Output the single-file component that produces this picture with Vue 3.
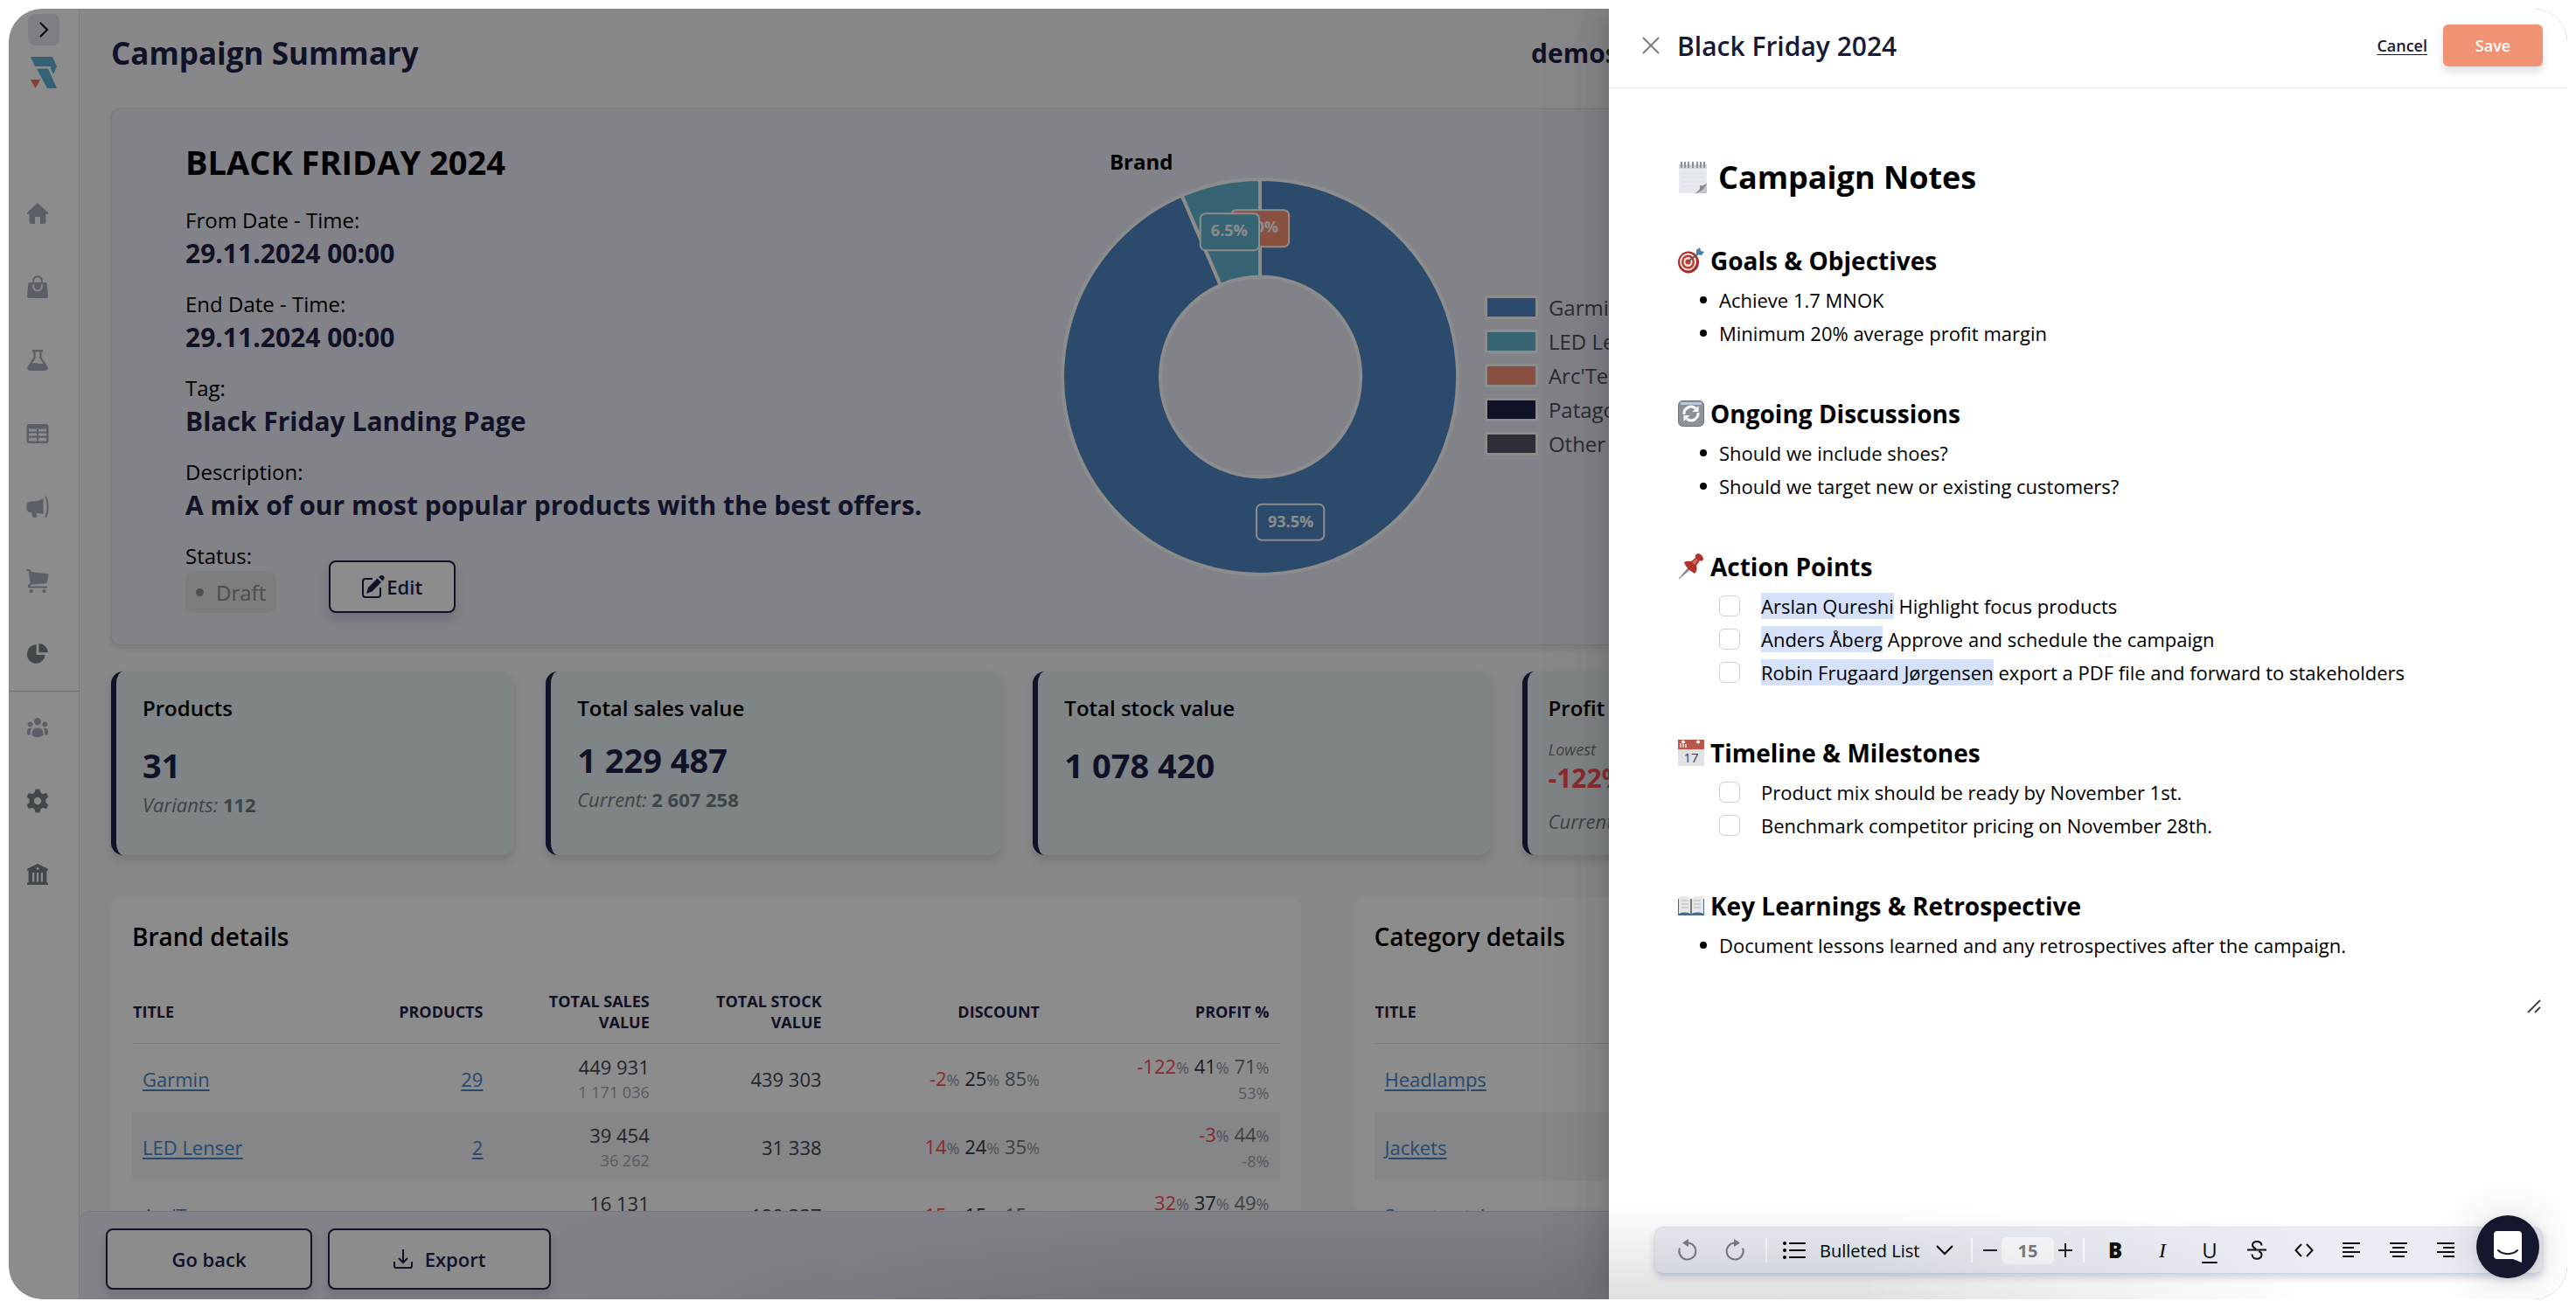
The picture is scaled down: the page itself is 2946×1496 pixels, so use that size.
<script setup>
import { ref } from 'vue';

const navItems = [
  { name: 'Home', path: 'M12 0 L24 11.4 A1 1 0 0 1 23.2 13 H21.4 V22 A2 2 0 0 1 19.4 24 H15 V17 A1 1 0 0 0 14 16 H10 A1 1 0 0 0 9 17 V24 H4.6 A2 2 0 0 1 2.6 22 V13 H.8 A1 1 0 0 1 0 11.4 Z' },
  { name: 'Products', path: 'M6 7 V5.6 A6 6.4 0 0 1 18 5.6 V7 H21.4 A1.2 1.2 0 0 1 22.6 8 L24 22.8 A2 2 0 0 1 22 25 H2 A2 2 0 0 1 0 22.8 L1.4 8 A1.2 1.2 0 0 1 2.6 7 Z M8 7 H16 V5.6 A4 4.4 0 0 0 8 5.6 Z M6.2 9.4 V11.6 A5.8 6 0 0 0 17.8 11.6 V9.4 H15.8 V11.6 A3.8 4 0 0 1 8.2 11.6 V9.4 Z' },
  { name: 'Experiments', path: 'M6 0 H18 V2.4 H16.6 V9 L23.4 19 A3.4 3.4 0 0 1 20.6 24 H3.4 A3.4 3.4 0 0 1 .6 19 L7.4 9 V2.4 H6 Z M9.6 2.4 V9.8 L5.6 15.6 C9 13.4 12 17.2 18.6 15.8 L14.4 9.8 V2.4 Z' },
  { name: 'Tables', path: 'M2.5 1 H21.5 A3 3 0 0 1 24.5 4 V20 A3 3 0 0 1 21.5 23 H2.5 A3 3 0 0 1 -.5 20 V4 A3 3 0 0 1 2.5 1 Z M2 6.4 V9.4 H11 V6.4 Z M13 6.4 V9.4 H22 V6.4 Z M2 11.6 V14.6 H11 V11.6 Z M13 11.6 V14.6 H22 V11.6 Z M2 16.8 V20.4 H11 V16.8 Z M13 16.8 V20.4 H22 V16.8 Z' },
  { name: 'Campaigns', path: 'M18.6 2 V20 L10.6 18.4 L11.4 22 A1.4 1.4 0 0 1 10 23.8 H7.6 A1.4 1.4 0 0 1 6.2 22.8 L5 18 H4 A4.6 4.6 0 0 1 -.6 13.4 V10 A4.6 4.6 0 0 1 4 5.4 H8 C12 5.2 15.4 4 18.6 2 Z M20.2 0 C23.4 7 23.4 16 20.2 23.4 L22 24 C25.4 17 25.4 6.6 22 -.6 Z' },
  { name: 'Orders', path: 'M-.6 -1 H2.6 A1.6 1.6 0 0 1 4.2 .2 L4.6 2 L24.6 4.4 L22.8 13.8 A2 2 0 0 1 21 15.4 L5.6 16.6 C3.4 17 3.2 18.6 5 18.6 H23 V20.6 H3.4 C-.6 20.4 .2 16.4 3.6 15 L1.8 1 H-.6 Z M4.8 22 A2.1 2.1 0 1 1 4.7 22 Z M19.6 22 A2.1 2.1 0 1 1 19.5 22 Z' },
  { name: 'Reports', dark: true, path: 'M10.6 1.2 V13 H20.6 A10.4 10.8 0 1 1 10.6 1.2 Z M13.4 0 A10.6 10.6 0 0 1 24 10.2 H13.4 Z' },
  { name: 'Users', divided: true, path: 'M12 0 A4 4.2 0 1 1 11.9 0 Z M3.6 4.6 A3 3 0 1 1 3.5 4.6 Z M20.4 4.6 A3 3 0 1 1 20.3 4.6 Z M12 11.4 C17 11.4 18.6 15 18.6 19.4 C16 23 8 23 5.4 19.4 C5.4 15 7 11.4 12 11.4 Z M5.4 12 C3.8 14 3.4 16.4 3.6 19.4 H1 C-.6 18 -1 12.6 3 11.8 Z M18.6 12 C20.2 14 20.6 16.4 20.4 19.4 H23 C24.6 18 25 12.6 21 11.8 Z' },
  { name: 'Settings', dark: true, path: 'M9.6 -1.4 H14.4 L15.4 2.6 L18 4.2 L22 3 L24.4 7.2 L21.4 10.2 V13.8 L24.4 16.8 L22 21 L18 19.8 L15.4 21.4 L14.4 25.4 H9.6 L8.6 21.4 L6 19.8 L2 21 L-.4 16.8 L2.6 13.8 V10.2 L-.4 7.2 L2 3 L6 4.2 L8.6 2.6 Z M12 7.8 A4.2 4.2 0 1 0 12.1 7.8 Z' },
  { name: 'Organisation', dark: true, path: 'M12 0 L23.6 5.4 V8 H22.4 V21.6 H24 V24 H0 V21.6 H1.6 V8 H.4 V5.4 Z M12 4 A1.5 1.5 0 1 0 12.1 4 Z M6 10 V20.6 H8.2 V10 Z M10.9 10 V20.6 H13.1 V10 Z M15.8 10 V20.6 H18 V10 Z' },
];

const details = [
  { label: 'From Date - Time:', value: '29.11.2024 00:00' },
  { label: 'End Date - Time:', value: '29.11.2024 00:00' },
  { label: 'Tag:', value: 'Black Friday Landing Page' },
  { label: 'Description:', value: 'A mix of our most popular products with the best offers.' },
];

const brands = [
  { name: 'Garmin', color: '#5087c4' },
  { name: 'LED Lenser', color: '#64b6cf' },
  { name: "Arc'Teryx", color: '#f79275' },
  { name: 'Patagonia', color: '#1e2348' },
  { name: 'Other', color: '#525466' },
];

const columns = ['Title', 'Products', 'Total sales value', 'Total stock value', 'Discount', 'Profit %'];

const tables = [
  {
    title: 'Brand details',
    rows: [
      { name: 'Garmin', products: 29, sales: '449 931', prev: '1 171 036', stock: '439 303', discount: [-2, 25, 85], profit: [-122, 41, 71], total: '53%' },
      { name: 'LED Lenser', products: 2, sales: '39 454', prev: '36 262', stock: '31 338', discount: [14, 24, 35], profit: [-3, 44], total: '-8%' },
      { name: "Arc'Teryx", products: '', sales: '16 131', prev: '14 208', stock: '129 337', discount: [15, 15, 15], profit: [32, 37, 49], total: '41%' },
    ],
  },
  {
    title: 'Category details',
    rows: [
      { name: 'Headlamps', products: 2, sales: '39 454', prev: '36 262', stock: '31 338', discount: [14, 24, 35], profit: [-3, 44], total: '-8%' },
      { name: 'Jackets', products: 4, sales: '16 131', prev: '14 208', stock: '129 337', discount: [15, 15, 15], profit: [32, 37, 49], total: '41%' },
      { name: 'Smartwatch', products: 25, sales: '449 931', prev: '1 171 036', stock: '439 303', discount: [-2, 25, 85], profit: [-122, 41, 71], total: '53%' },
    ],
  },
];

const discussions = ['Should we include shoes?', 'Should we target new or existing customers?'];

const actions = ref([
  { id: 1, who: 'Arslan Qureshi', text: 'Highlight focus products', done: false },
  { id: 2, who: 'Anders Åberg', text: 'Approve and schedule the campaign', done: false },
  { id: 3, who: 'Robin Frugaard Jørgensen', text: 'export a PDF file and forward to stakeholders', done: false },
]);

const milestones = ref([
  { id: 4, text: 'Product mix should be ready by November 1st.', done: false },
  { id: 5, text: 'Benchmark competitor pricing on November 28th.', done: false },
]);

const blockType = ref('Bulleted List');
const fontSize = ref(15);

// low is red, mid is dark, high is grey
function tone(index) {
  return ['low', 'mid', 'high'][index];
}
</script>

<template>
  <main class="page">
    <div class="frame">
      <aside class="sidebar">
        <button class="sidebar-toggle" aria-label="Expand menu">
          <svg width="12" height="20" viewBox="0 0 12 20"><path d="M2 2 L10 10 L2 18" fill="none" stroke="#000" stroke-width="2" /></svg>
        </button>
        <svg class="logo" width="30" height="36" viewBox="0 0 30 36">
          <path d="M0 0 H25 L30 11 L26 20 L22.5 12.5 L24 11 H5 Z" fill="#5fb3d3" />
          <path d="M7 13.5 H20 L30 36 H19 Z" fill="#5fb3d3" />
          <path d="M0 26 H11 L5.500 36 Z" fill="#ff6a5a" />
        </svg>
        <nav class="nav">
          <a v-for="item in navItems" :key="item.name" href="#" class="nav-link" :class="{ dark: item.dark, divided: item.divided }" :aria-label="item.name">
            <svg width="28" height="28" viewBox="-2 -2 28 28"><path :d="item.path" fill="currentColor" fill-rule="evenodd" /></svg>
          </a>
        </nav>
      </aside>

      <div class="content">
        <div class="scroll">
          <header class="top">
            <h1>Campaign Summary</h1>
            <span class="store">demostore</span>
          </header>

          <section class="summary">
            <div class="info">
              <h2>BLACK FRIDAY 2024</h2>
              <dl>
                <div v-for="item in details" :key="item.label" class="detail">
                  <dt>{{ item.label }}</dt>
                  <dd>{{ item.value }}</dd>
                </div>
              </dl>
              <div class="status">
                <div>
                  <p class="status-label">Status:</p>
                  <span class="badge">Draft</span>
                </div>
                <button class="btn edit-btn">
                  <svg width="26" height="26" viewBox="0 0 26 26">
                    <path d="M12 4 H4 A3 3 0 0 0 1 7 V22 A3 3 0 0 0 4 25 H18 A3 3 0 0 0 21 22 V14" fill="none" stroke="currentColor" stroke-width="2" />
                    <path d="M5 21 L7 14 L17.500 3.500 L22 8 L11.500 18.500 Z M19 2 L21 .5 A3 3 0 0 1 25 4.800 L23.500 6.500 Z" fill="currentColor" />
                  </svg>
                  Edit
                </button>
              </div>
            </div>

            <div class="chart">
              <h3>Brand</h3>
              <div class="chart-row">
                <svg width="458" height="458" viewBox="-228 -228 456 456">
                  <g stroke="#fff" stroke-width="4">
                    <path d="M0 -225 A225 225 0 1 1 -89 -206.600 L-45 -104.500 A114 114 0 1 0 0 -114 Z" fill="#5087c4" />
                    <path d="M-89 -206.600 A225 225 0 0 1 0 -225 V-114 A114 114 0 0 0 -45 -104.500 Z" fill="#64b6cf" />
                  </g>
                  <g stroke="#fff" stroke-width="2">
                    <rect x="-33" y="-190" width="66" height="42" rx="6" fill="#f79275" />
                    <rect x="-4" y="145" width="77" height="41" rx="6" fill="#5087c4" />
                  </g>
                  <g class="chart-label">
                    <text x="0" y="-164">0.0%</text>
                    <text x="35" y="171">93.5%</text>
                  </g>
                  <rect x="-68" y="-186" width="67" height="42" rx="6" fill="#64b6cf" stroke="#fff" stroke-width="2" />
                  <text class="chart-label" x="-35" y="-160">6.5%</text>
                </svg>
                <ul class="legend">
                  <li v-for="brand in brands" :key="brand.name">
                    <span class="swatch" :style="{ backgroundColor: brand.color }"></span>{{ brand.name }}
                  </li>
                </ul>
              </div>
            </div>
          </section>

          <section class="stats">
            <article class="stat">
              <h3>Products</h3>
              <p class="stat-value">31</p>
              <p class="stat-note"><em>Variants:</em> <b>112</b></p>
            </article>
            <article class="stat raised">
              <h3>Total sales value</h3>
              <p class="stat-value">1 229 487</p>
              <p class="stat-note"><em>Current:</em> <b>2 607 258</b></p>
            </article>
            <article class="stat">
              <h3>Total stock value</h3>
              <p class="stat-value">1 078 420</p>
            </article>
            <article class="stat raised compact">
              <h3>Profit</h3>
              <p class="stat-caption">Lowest</p>
              <p class="stat-low">-122%</p>
              <p class="stat-note"><em>Current:</em></p>
            </article>
          </section>

          <section class="tables">
            <article v-for="table in tables" :key="table.title" class="table-card">
              <h3>{{ table.title }}</h3>
              <table>
                <thead>
                  <tr>
                    <th v-for="column in columns" :key="column">{{ column }}</th>
                  </tr>
                </thead>
                <tbody>
                  <tr v-for="row in table.rows" :key="row.name">
                    <td><a href="#">{{ row.name }}</a></td>
                    <td><a href="#">{{ row.products }}</a></td>
                    <td>{{ row.sales }}<small>{{ row.prev }}</small></td>
                    <td>{{ row.stock }}</td>
                    <td>
                      <template v-for="(value, i) in row.discount" :key="i"><span :class="tone(i)">{{ value }}</span><i>%</i>{{ ' ' }}</template>
                    </td>
                    <td>
                      <template v-for="(value, i) in row.profit" :key="i"><span :class="tone(row.profit.length === 2 && i ? 2 : i)">{{ value }}</span><i>%</i>{{ ' ' }}</template>
                      <small>{{ row.total }}</small>
                    </td>
                  </tr>
                </tbody>
              </table>
            </article>
          </section>
        </div>

        <footer class="footer">
          <button class="btn back-btn">Go back</button>
          <button class="btn export-btn">
            <svg width="22" height="22" viewBox="0 0 22 22"><path d="M11 0 V15 M6 10 L11 15 L16 10 M1 14 V19 A2 2 0 0 0 3 21 H19 A2 2 0 0 0 21 19 V14" fill="none" stroke="currentColor" stroke-width="2" /></svg>
            Export
          </button>
        </footer>
      </div>

      <div class="mask"></div>

      <aside class="drawer">
        <header class="drawer-header">
          <button class="close" aria-label="Close">
            <svg width="20" height="20" viewBox="0 0 20 20"><path d="M1 1 L19 19 M19 1 L1 19" stroke="#7c7c80" stroke-width="2" /></svg>
          </button>
          <h2>Black Friday 2024</h2>
          <button class="cancel">Cancel</button>
          <button class="save">Save</button>
        </header>

        <div class="notes">
          <h1>
            <svg width="34" height="38" viewBox="0 0 34 38">
              <path d="M1 4 H33 V26 L22 37 H1 Z" fill="#e6e9ee" />
              <path d="M1 4 H33 V9 H1 Z" fill="#d3d6dc" />
              <path d="M4 1 V8 M8 1 V8 M12 1 V8 M17 1 V8 M22 1 V8 M26 1 V8 M30 1 V8" stroke="#8c9098" stroke-width="2" />
              <path d="M3 14 H31 M3 19 H31 M3 24 H31 M3 29 H24" stroke="#d9dfe8" />
              <path d="M33 25 C30 29 27 28 25 28 C26 32 24 35 19 37 H33 Z" fill="#c3c6cb" />
              <path d="M33 25 C31 32 26 36 19 37 C25 34 26 31 25 28 C28 29 31 28 33 25 Z" fill="#84888f" />
            </svg>
            Campaign Notes
          </h1>

          <section>
            <h2>
              <svg width="30" height="30" viewBox="0 0 30 30">
                <ellipse cx="12" cy="17" rx="12" ry="12.500" fill="#a92b22" />
                <ellipse cx="11.500" cy="16.500" rx="9.500" ry="10" fill="#f2e6e2" />
                <ellipse cx="11.500" cy="16.500" rx="7.500" ry="8" fill="#c8392d" />
                <ellipse cx="11.500" cy="16.500" rx="5" ry="5.500" fill="#f2e6e2" />
                <circle cx="11.500" cy="16.500" r="3" fill="#c8392d" />
                <path d="M12 16 L24 6" stroke="#50616e" stroke-width="2" />
                <path d="M21 8 V3 L25 0 L26 4 L30 5 L27 9 Z" fill="#4e7f9d" />
              </svg>
              Goals &amp; Objectives
            </h2>
            <ul class="bullets">
              <li>Achieve 1.7 MNOK</li>
              <li>Minimum 20% average profit margin</li>
            </ul>
          </section>

          <section>
            <h2>
              <svg width="30" height="30" viewBox="0 0 30 30">
                <rect x=".5" y=".5" width="29" height="29" rx="5" fill="#8b9299" stroke="#6d747b" />
                <path d="M3 2 H27 V5 H3 Z" fill="#b9c6d6" />
                <path d="M7 16 A8 8 0 0 1 20 9 M23 14 A8 8 0 0 1 10 21" fill="none" stroke="#fff" stroke-width="3" />
                <path d="M23.500 6 V13 H16.500 Z M6.500 24 V17 H13.500 Z" fill="#fff" />
              </svg>
              Ongoing Discussions
            </h2>
            <ul class="bullets">
              <li v-for="text in discussions" :key="text">{{ text }}</li>
            </ul>
          </section>

          <section>
            <h2>
              <svg width="30" height="30" viewBox="0 0 30 30">
                <path d="M1 29 L13 15 L15 17 Z" fill="#7c8791" stroke="#7c8791" />
                <path d="M7 10 C10 8 13 9 15 9 L20 5 C19 3 21 0 23 0 C27 1 29 4 29 7 C28 9 26 9 25 8 L21 14 C22 17 22 20 19 23 C14 20 9 16 7 10 Z" fill="#b0302a" />
                <path d="M16 10 L21 6 L23 8 L19 13 Z" fill="#d9675c" />
              </svg>
              Action Points
            </h2>
            <ul class="checks">
              <li v-for="item in actions" :key="item.id">
                <input :id="`task-${item.id}`" v-model="item.done" type="checkbox">
                <label :for="`task-${item.id}`"><span class="mention">{{ item.who }}</span> {{ item.text }}</label>
              </li>
            </ul>
          </section>

          <section>
            <h2>
              <svg width="30" height="30" viewBox="0 0 30 30">
                <rect width="30" height="30" rx="1" fill="#e1e2e5" />
                <path d="M0 0 H30 V11 H0 Z" fill="#b9584a" />
                <path d="M3 4 V9 M6 5 V9 M9 5 V9" stroke="#e5c3bd" stroke-width="2" />
                <circle cx="6" cy="2.500" r="2" fill="#fff" />
                <circle cx="23" cy="2.500" r="2" fill="#fff" />
                <text class="day" x="15" y="26">17</text>
              </svg>
              Timeline &amp; Milestones
            </h2>
            <ul class="checks">
              <li v-for="item in milestones" :key="item.id">
                <input :id="`task-${item.id}`" v-model="item.done" type="checkbox">
                <label :for="`task-${item.id}`">{{ item.text }}</label>
              </li>
            </ul>
          </section>

          <section>
            <h2>
              <svg width="30" height="30" viewBox="0 0 30 30">
                <path d="M0 7 H30 V26 H0 Z" fill="#476a91" />
                <path d="M1 5 C6 3 12 4 15 7 C18 4 24 3 29 5 V24 C24 22 18 22 15 25 C12 22 6 22 1 24 Z" fill="#e6e7e9" />
                <path d="M15 7 V25" stroke="#74777c" stroke-width="2" />
                <path d="M4 9 H12 M4 13 H12 M4 17 H12 M18 9 H26 M18 13 H26 M18 17 H26" stroke="#b5b8bd" />
              </svg>
              Key Learnings &amp; Retrospective
            </h2>
            <ul class="bullets">
              <li>Document lessons learned and any retrospectives after the campaign.</li>
            </ul>
          </section>

          <svg class="resize" width="16" height="16" viewBox="0 0 16 16"><path d="M1 15 L15 1 M9 15 L15 9" stroke="#444" stroke-width="2" /></svg>
        </div>

        <div class="toolbar">
          <button class="tool muted" aria-label="Undo">
            <svg width="24" height="26" viewBox="0 0 24 26"><path d="M12 4.500 A9.500 9.500 0 1 1 3 10.500" fill="none" stroke="currentColor" stroke-width="2" /><path d="M6 4.500 L13 0 V9 Z" fill="currentColor" /></svg>
          </button>
          <button class="tool muted" aria-label="Redo">
            <svg width="24" height="26" viewBox="0 0 24 26"><path d="M12 4.500 A9.500 9.500 0 1 0 21 10.500" fill="none" stroke="currentColor" stroke-width="2" /><path d="M18 4.500 L11 0 V9 Z" fill="currentColor" /></svg>
          </button>
          <span class="divider"></span>
          <label class="block-type">
            <svg width="26" height="20" viewBox="0 0 26 20"><path d="M7 2 H26 M7 10 H26 M7 18 H26" stroke="#000" stroke-width="2" /><circle cx="2" cy="2" r="2" /><circle cx="2" cy="10" r="2" /><circle cx="2" cy="18" r="2" /></svg>
            <select v-model="blockType" aria-label="Block type">
              <option>Bulleted List</option>
              <option>Normal</option>
            </select>
            <svg width="20" height="12" viewBox="0 0 20 12"><path d="M1 1 L10 10 L19 1" fill="none" stroke="#000" stroke-width="2" /></svg>
          </label>
          <span class="divider"></span>
          <button class="step" aria-label="Decrease font size" @click="fontSize--">
            <svg width="16" height="16" viewBox="0 0 16 16"><path d="M0 8 H16" stroke="#222" stroke-width="2" /></svg>
          </button>
          <input v-model="fontSize" class="size" type="text" aria-label="Font size">
          <button class="step" aria-label="Increase font size" @click="fontSize++">
            <svg width="16" height="16" viewBox="0 0 16 16"><path d="M0 8 H16 M8 0 V16" stroke="#222" stroke-width="2" /></svg>
          </button>
          <span class="divider"></span>
          <button class="tool bold">B</button>
          <button class="tool italic">I</button>
          <button class="tool underline">U</button>
          <button class="tool" aria-label="Strikethrough">
            <svg width="24" height="22" viewBox="0 0 24 22"><path d="M17.500 5.500 C17 -.5 7 -.5 7 5 C7 7.500 9 8.500 11 9.500 M14 12 C16 12.800 17.500 14 17.500 16 C17.500 22.500 6.500 22.500 6.500 15.500 M1 10.500 H23" fill="none" stroke="currentColor" stroke-width="2" /></svg>
          </button>
          <button class="tool" aria-label="Code">
            <svg width="22" height="16" viewBox="0 0 22 16"><path d="M8 1 L1.500 8 L8 15 M14 1 L20.500 8 L14 15" fill="none" stroke="currentColor" stroke-width="2" /></svg>
          </button>
          <button class="tool" aria-label="Align left">
            <svg width="20" height="18" viewBox="0 0 20 18"><path d="M0 1 H20 M0 6 H13 M0 11 H20 M0 16 H13" stroke="currentColor" stroke-width="2" /></svg>
          </button>
          <button class="tool" aria-label="Align center">
            <svg width="20" height="18" viewBox="0 0 20 18"><path d="M0 1 H20 M3 6 H17 M0 11 H20 M3 16 H17" stroke="currentColor" stroke-width="2" /></svg>
          </button>
          <button class="tool" aria-label="Align right">
            <svg width="20" height="18" viewBox="0 0 20 18"><path d="M0 1 H20 M7 6 H20 M0 11 H20 M7 16 H20" stroke="currentColor" stroke-width="2" /></svg>
          </button>
        </div>
      </aside>

      <div class="haze"></div>

      <button class="chat" aria-label="Open chat">
        <svg width="32" height="36" viewBox="0 0 32 36">
          <path d="M4 0 H28 A4 4 0 0 1 32 4 V36 L22 32 H4 A4 4 0 0 1 0 28 V4 A4 4 0 0 1 4 0 Z" fill="#fff" />
          <path d="M5 22 C11 27.500 21 27.500 27 22" fill="none" stroke="#14172e" stroke-width="2" stroke-linecap="round" />
        </svg>
      </button>
    </div>
  </main>
</template>

<style>
body {
  margin: 0;
  background-color: #fff;
}
</style>

<style scoped>
* {
  box-sizing: border-box;
}

.page {
  height: 100vh;
  padding: 10px;
  font-family: "Open Sans", "Liberation Sans", sans-serif;
  font-size: 22px;
  color: #000;
}

h1, h2, h3, p, ul, dl, dd {
  margin: 0;
  padding: 0;
}

ul {
  list-style: none;
}

button, input, select {
  font-family: inherit;
  cursor: pointer;
}

.frame {
  position: relative;
  display: flex;
  height: 100%;
  border-radius: 38px;
  overflow: hidden;
}

/* sidebar */
.sidebar {
  width: 81px;
  flex-shrink: 0;
  display: flex;
  flex-direction: column;
  border-right: 1px solid #dfe1ea;
  background-color: #fff;
}

.sidebar-toggle {
  display: flex;
  align-items: center;
  justify-content: center;
  width: 36px;
  height: 36px;
  margin: 6px 0 13px 22px;
  border: none;
  border-radius: 8px;
  background-color: #e6e8f2;
}

.logo {
  margin-left: 25px;
}

.nav {
  margin-top: 101px;
}

.nav-link {
  display: flex;
  align-items: center;
  height: 84px;
  padding-left: 19px;
  color: #a5adbd;
}

.nav-link.dark {
  color: #75838a;
}

.nav-link.divided {
  border-top: 1px solid #c9ccda;
}

/* page content */
.content {
  flex: 1;
  min-width: 0;
  display: flex;
  flex-direction: column;
  background-color: #f7f7fb;
}

.scroll {
  flex: 1;
  min-height: 0;
  overflow: hidden;
  padding: 0 28px 0 36px;
}

.top {
  display: grid;
  grid-template-columns: 58.4% 1fr;
  align-items: center;
  height: 100px;
  margin-bottom: 14px;
  color: #1e2348;
}

.top h1 {
  font-size: 35px;
  font-weight: 700;
}

.store {
  font-size: 30px;
  font-weight: 700;
}

.summary {
  display: grid;
  grid-template-columns: 38.5% 1fr;
  padding: 40px 0 36px;
  border: 1px solid #dcdee8;
  border-radius: 10px;
  background-color: #eceef7;
  box-shadow: 0 3px 6px rgba(32, 38, 80, 0.12);
}

.info {
  padding-left: 84px;
  white-space: nowrap;
}

.info h2 {
  margin-bottom: 31px;
  font-size: 38px;
  line-height: 40px;
  font-weight: 700;
}

.detail {
  margin-bottom: 20px;
}

.detail dt, .status-label {
  font-size: 24px;
  line-height: 32px;
}

.detail dd {
  font-size: 30px;
  line-height: 44px;
  font-weight: 700;
  color: #1e2348;
}

.status {
  display: flex;
  align-items: flex-end;
  gap: 60px;
}

.badge {
  display: flex;
  align-items: center;
  gap: 14px;
  height: 48px;
  margin-top: 1px;
  padding: 0 12px;
  border-radius: 10px;
  background-color: #e2e3e8;
  font-size: 24px;
  color: #808e93;
}

.badge::before {
  content: "";
  width: 9px;
  height: 9px;
  border-radius: 50%;
  background-color: #8e9198;
}

.btn {
  display: flex;
  align-items: center;
  justify-content: center;
  border: 2px solid #1e2348;
  border-radius: 8px;
  background-color: #fff;
  box-shadow: 0 8px 12px rgba(32, 38, 80, 0.15);
  font-size: 22px;
  font-weight: 600;
  color: #1e2348;
}

.edit-btn {
  gap: 2px;
  width: 145px;
  height: 60px;
}

.chart {
  padding: 4px 0 0 14px;
}

.chart h3 {
  margin: 0 0 1px 57px;
  font-size: 24px;
  line-height: 32px;
  font-weight: 700;
}

.chart-row {
  display: flex;
  align-items: center;
  gap: 28px;
}

.chart-label {
  font-size: 18px;
  font-weight: 700;
  text-anchor: middle;
  fill: #fff;
}

.legend {
  padding-bottom: 4px;
}

.legend li {
  display: flex;
  align-items: center;
  gap: 12px;
  height: 39px;
  font-size: 24px;
  color: #50525c;
}

.swatch {
  width: 61px;
  height: 27px;
  border: 3px solid #fff;
}

.stats {
  display: grid;
  grid-template-columns: 461fr 521fr 523fr 1167fr;
  gap: 36px;
  margin-top: 30px;
}

.stat {
  height: 210px;
  padding: 26px 30px;
  border-left: 6px solid #1e2348;
  border-radius: 14px;
  background-color: #e7f0f5;
  box-shadow: 0 6px 10px rgba(32, 38, 80, 0.15);
}

.stat h3 {
  margin-bottom: 25px;
  font-size: 24px;
  line-height: 32px;
  font-weight: 600;
}

.stat.raised h3 {
  margin-bottom: 19px;
}

.stat.compact {
  padding-left: 24px;
}

.stat-value {
  margin-bottom: 6px;
  font-size: 38px;
  line-height: 48px;
  font-weight: 700;
  color: #1e2348;
}

.stat-note {
  font-size: 22px;
  line-height: 30px;
  color: #747d82;
}

.stat-caption {
  font-size: 18px;
  line-height: 24px;
  font-style: italic;
  color: #747d82;
}

.stat-low {
  margin-bottom: 13px;
  font-size: 30px;
  line-height: 42px;
  font-weight: 700;
  color: #ff4d4f;
}

.tables {
  display: grid;
  grid-template-columns: 1fr 1fr;
  gap: 60px;
  margin-top: 48px;
}

.table-card {
  padding: 25px 24px;
  border-radius: 12px;
  background-color: #fff;
}

.table-card h3 {
  margin-bottom: 29px;
  font-size: 28px;
  line-height: 40px;
  font-weight: 600;
}

table {
  width: 100%;
  table-layout: fixed;
  border-collapse: collapse;
}

th {
  padding: 13px 12px 12px 46px;
  border-bottom: 1px solid #e1e4ef;
  font-size: 18px;
  line-height: 24px;
  font-weight: 700;
  text-align: right;
  text-transform: uppercase;
  color: #1e2348;
}

th:nth-child(1) {
  width: 17%;
  padding-left: 1px;
  text-align: left;
}

th:nth-child(2), th:nth-child(3) {
  width: 14.5%;
}

th:nth-child(4) {
  width: 15%;
}

th:nth-child(5) {
  width: 19%;
}

td {
  height: 78px;
  padding: 3px 12px 0;
  font-size: 22px;
  line-height: 30px;
  text-align: right;
  color: #3f4654;
}

td:first-child {
  text-align: left;
}

tbody tr:nth-child(even) {
  background-color: #f1f4f8;
}

td a {
  text-underline-offset: 3px;
  color: #4a86c8;
}

td small {
  display: block;
  font-size: 18px;
  line-height: 28px;
  color: #a0a5b0;
}

td i {
  font-size: 18px;
  font-style: normal;
  color: #9599a4;
}

.low {
  font-weight: 500;
  color: #ff4d4f;
}

.mid {
  font-weight: 500;
  color: #333947;
}

.high {
  font-weight: 500;
  color: #6a787f;
}

.footer {
  display: flex;
  gap: 18px;
  height: 101px;
  padding: 19px 30px 0;
  border-top: 1px solid #d8dae6;
  border-top-left-radius: 12px;
  background-color: #eceef7;
}

.back-btn {
  width: 236px;
  height: 70px;
}

.export-btn {
  gap: 14px;
  width: 255px;
  height: 70px;
}

.mask {
  position: absolute;
  inset: 0;
  background-color: rgba(0, 0, 0, 0.45);
}

/* notes drawer */
.drawer {
  position: absolute;
  top: 0;
  right: 0;
  bottom: 0;
  width: 1096px;
  display: flex;
  flex-direction: column;
  background-color: #fff;
  box-shadow: -12px 0 32px rgba(0, 0, 0, 0.08), -6px 0 12px -8px rgba(0, 0, 0, 0.12), -18px 0 56px 16px rgba(0, 0, 0, 0.05);
}

.drawer-header {
  display: flex;
  align-items: center;
  height: 91px;
  padding: 0 28px 6px 38px;
  border-bottom: 1px solid #e8edf5;
}

.close {
  display: flex;
  margin-right: 20px;
  padding: 0;
  border: none;
  background: none;
}

.drawer-header h2 {
  flex: 1;
  font-size: 30px;
  font-weight: 600;
  color: #161a35;
}

.cancel {
  margin-right: 18px;
  padding: 0;
  border: none;
  background: none;
  font-size: 18px;
  font-weight: 600;
  text-decoration: underline;
  text-underline-offset: 3px;
  color: #161a35;
}

.save {
  width: 114px;
  height: 48px;
  border: none;
  border-radius: 6px;
  background-color: #f29274;
  box-shadow: 0 6px 10px rgba(32, 38, 80, 0.14);
  font-size: 18px;
  font-weight: 600;
  color: #fff;
}

.notes {
  flex: 1;
  display: flex;
  flex-direction: column;
  padding: 78px 30px 0 79px;
}

.notes h1 {
  display: flex;
  align-items: center;
  gap: 12px;
  margin-bottom: 49px;
  font-size: 36px;
  line-height: 48px;
  font-weight: 700;
}

.notes h2 {
  display: flex;
  align-items: center;
  gap: 7px;
  margin-bottom: 4px;
  font-size: 28px;
  line-height: 44px;
  font-weight: 700;
}

.notes section {
  margin-bottom: 51px;
}

.notes section:last-of-type {
  margin-bottom: 43px;
}

.notes li {
  display: flex;
  align-items: center;
  line-height: 38px;
}

.bullets li {
  gap: 14px;
  padding-left: 25px;
}

.bullets li::before {
  content: "";
  width: 8px;
  height: 8px;
  border-radius: 50%;
  background-color: #000;
}

.checks li {
  gap: 24px;
  padding-left: 47px;
}

.checks input {
  appearance: none;
  width: 24px;
  height: 24px;
  margin: 0;
  border: 1px solid #cfd0d6;
  border-radius: 6px;
  background-color: #fff;
}

.checks input:checked {
  background-color: #5087c4;
}

.mention {
  background-color: #d6e2fb;
}

.day {
  font-size: 15px;
  font-weight: 400;
  text-anchor: middle;
  fill: #3c3e44;
}

.resize {
  align-self: flex-end;
}

.toolbar {
  display: flex;
  align-items: center;
  height: 54px;
  margin: 0 28px 29px 52px;
  padding-left: 10px;
  border: 1px solid #dfe3ec;
  border-bottom-color: #c8d3ee;
  border-radius: 10px;
  background-color: #eaedf3;
  box-shadow: 0 4px 8px rgba(32, 38, 80, 0.2);
}

.tool {
  display: flex;
  align-items: center;
  justify-content: center;
  width: 54px;
  padding: 0;
  border: none;
  background: none;
  font-size: 24px;
  line-height: 32px;
  color: #111;
}

.tool.muted {
  color: #7c7e84;
}

.tool.bold {
  font-weight: 800;
}

.tool.italic {
  font-family: "Liberation Serif", serif;
  font-style: italic;
}

.tool.underline {
  text-decoration: underline;
  text-underline-offset: 4px;
}

.divider {
  width: 2px;
  height: 28px;
  margin: 0 8px;
  background-color: #fff;
}

.block-type {
  display: flex;
  align-items: center;
  gap: 16px;
  padding: 0 12px 0 10px;
}

.block-type select {
  padding: 0 2px 0 0;
  border: none;
  appearance: none;
  background: none;
  font-size: 20px;
  color: #000;
}

.step {
  display: flex;
  padding: 0 4px;
  border: none;
  background: none;
}

.size {
  width: 60px;
  height: 31px;
  margin: 0 1px;
  padding: 0;
  border: none;
  border-radius: 6px;
  background-color: #fafafc;
  font-size: 20px;
  font-weight: 700;
  text-align: center;
  color: #7b7d84;
}

/* soft shade along the bottom edge */
.haze {
  position: absolute;
  left: 20%;
  right: 10%;
  bottom: 0;
  height: 110px;
  background: linear-gradient(to top, rgba(10, 12, 24, 0.13), transparent);
  mask-image: linear-gradient(to right, transparent, #000 35%, #000 75%, transparent);
  pointer-events: none;
}

.chat {
  position: absolute;
  right: 32px;
  bottom: 24px;
  display: flex;
  align-items: center;
  justify-content: center;
  width: 72px;
  height: 72px;
  border: none;
  border-radius: 50%;
  background-color: #14172e;
  box-shadow: 0 2px 12px rgba(0, 0, 0, 0.1), 0 4px 60px rgba(0, 0, 0, 0.16);
}
</style>
